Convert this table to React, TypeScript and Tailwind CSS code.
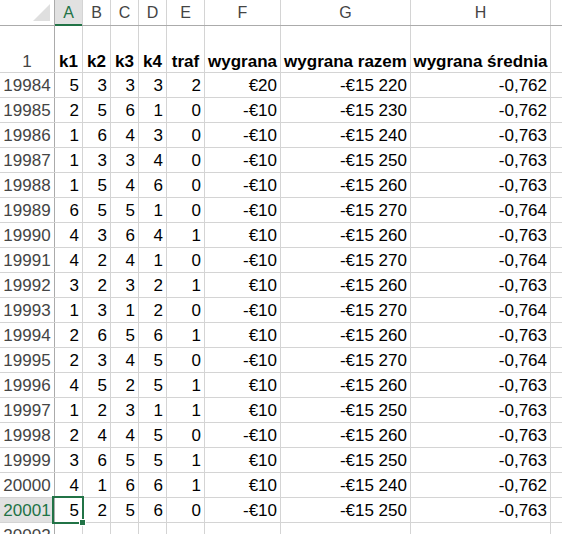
import React from 'react';

type Row = [number, number, number, number, number, number, string, string, string];

const rows: Row[] = [
  [19984, 5, 3, 3, 3, 2, '€20', '-€15 220', '-0,762'],
  [19985, 2, 5, 6, 1, 0, '-€10', '-€15 230', '-0,762'],
  [19986, 1, 6, 4, 3, 0, '-€10', '-€15 240', '-0,763'],
  [19987, 1, 3, 3, 4, 0, '-€10', '-€15 250', '-0,763'],
  [19988, 1, 5, 4, 6, 0, '-€10', '-€15 260', '-0,763'],
  [19989, 6, 5, 5, 1, 0, '-€10', '-€15 270', '-0,764'],
  [19990, 4, 3, 6, 4, 1, '€10', '-€15 260', '-0,763'],
  [19991, 4, 2, 4, 1, 0, '-€10', '-€15 270', '-0,764'],
  [19992, 3, 2, 3, 2, 1, '€10', '-€15 260', '-0,763'],
  [19993, 1, 3, 1, 2, 0, '-€10', '-€15 270', '-0,764'],
  [19994, 2, 6, 5, 6, 1, '€10', '-€15 260', '-0,763'],
  [19995, 2, 3, 4, 5, 0, '-€10', '-€15 270', '-0,764'],
  [19996, 4, 5, 2, 5, 1, '€10', '-€15 260', '-0,763'],
  [19997, 1, 2, 3, 1, 1, '€10', '-€15 250', '-0,763'],
  [19998, 2, 4, 4, 5, 0, '-€10', '-€15 260', '-0,763'],
  [19999, 3, 6, 5, 5, 1, '€10', '-€15 250', '-0,763'],
  [20000, 4, 1, 6, 6, 1, '€10', '-€15 240', '-0,762'],
  [20001, 5, 2, 5, 6, 0, '-€10', '-€15 250', '-0,763'],
];

// column widths incl. right gridline; last one is the clipped column I
const widths = ['w-[28px]', 'w-[28px]', 'w-[28px]', 'w-[28px]', 'w-[38px]', 'w-[76px]', 'w-[130px]', 'w-[140px]', 'w-[90px]'];
const letters = ['A', 'B', 'C', 'D', 'E', 'F', 'G', 'H', ''];
const labels = ['k1', 'k2', 'k3', 'k4', 'traf', 'wygrana', 'wygrana razem', 'wygrana średnia', ''];

const App: React.FC = () => {
  return (
    <div className="w-[562px] h-[534px] overflow-hidden bg-white text-black font-['Liberation_Sans',Arial,sans-serif] text-[17px]">
      <div className="w-[700px]">
        {/* column headers */}
        <div className="flex h-[26px] border-b border-[#ababab]">
          <div className="w-[55px] shrink-0 border-r border-[#ababab] relative">
            <svg className="absolute left-0 top-0" width="54" height="25">
              <polygon points="33,21 50,21 50,4" fill="#dfdfdf" />
            </svg>
          </div>
          {letters.map((l, i) => (
            <div
              key={i}
              className={`${widths[i]} shrink-0 border-r border-[#d4d4d4] flex items-center justify-center text-[16px] leading-none relative ${
                i === 0 ? 'bg-[#e1e1e1] text-[#217346]' : 'text-[#444]'
              }`}
            >
              {l}
              {i === 0 && <div className="absolute left-0 right-0 bottom-[-1px] h-[2px] bg-[#217346]" />}
            </div>
          ))}
        </div>

        {/* row 1 with labels */}
        <div className="flex h-[47px] border-b border-[#d4d4d4]">
          <div className="w-[55px] shrink-0 border-r border-[#ababab] flex items-end justify-center text-[#444] leading-[20px]">
            1
          </div>
          {labels.map((t, i) => (
            <div
              key={i}
              className={`${widths[i]} shrink-0 border-r border-[#d4d4d4] flex items-end justify-center font-bold leading-[20px] whitespace-nowrap`}
            >
              {t}
            </div>
          ))}
        </div>

        {/* data rows */}
        {rows.map((r) => {
          const selected = r[0] === 20001;
          return (
            <div key={r[0]} className="flex h-[25px] border-b border-[#d4d4d4]">
              <div
                className={`w-[55px] shrink-0 border-r border-[#ababab] flex items-center justify-center pt-[2px] leading-[22px] ${
                  selected ? 'bg-[#e1e1e1] text-[#217346]' : 'text-[#444]'
                }`}
              >
                {r[0]}
              </div>
              {r.slice(1).map((v, i) => (
                <div
                  key={i}
                  className={`${widths[i]} shrink-0 border-r border-[#d4d4d4] flex items-center justify-end pr-[3px] pt-[2px] leading-[22px] whitespace-nowrap relative`}
                >
                  {v}
                  {selected && i === 0 && (
                    <>
                      <div className="absolute left-[-3px] top-[-2px] right-[-2px] bottom-[-2px] border-2 border-[#217346]" />
                      <div className="absolute right-[-4px] bottom-[-4px] w-[7px] h-[7px] bg-[#217346] border border-white" />
                    </>
                  )}
                </div>
              ))}
              <div className="w-[90px] shrink-0 border-r border-[#d4d4d4]" />
            </div>
          );
        })}

        {/* partially visible row */}
        <div className="flex h-[25px] border-b border-[#d4d4d4]">
          <div className="w-[55px] shrink-0 border-r border-[#ababab] flex items-center justify-center pt-[2px] leading-[22px] text-[#444]">
            20002
          </div>
          {widths.map((w, i) => (
            <div key={i} className={`${w} shrink-0 border-r border-[#d4d4d4]`} />
          ))}
        </div>
      </div>
    </div>
  );
};

export default App;
